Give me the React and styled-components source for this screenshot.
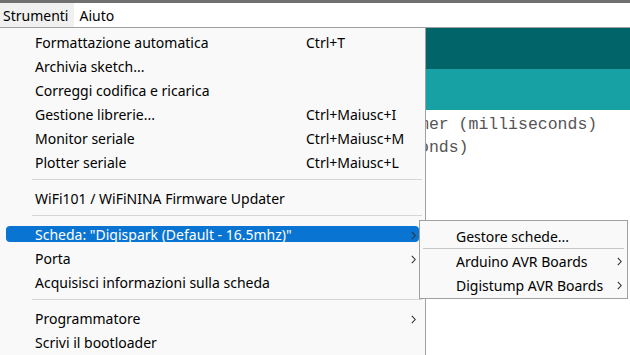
import React from "react";
import styled, { createGlobalStyle } from "styled-components";

const GlobalStyle = createGlobalStyle`
  html, body { margin: 0; padding: 0; background: #ffffff; overflow: hidden; }
  * { box-sizing: border-box; }
`;

const Screen = styled.div`
  position: relative;
  width: 630px;
  height: 355px;
  overflow: hidden;
  background: #ffffff;
  font-family: "Noto Sans", "Segoe UI", sans-serif;
  font-size: 14px;
  color: #000;
`;

const TitleStrip = styled.div`
  height: 3px;
  background: #707070;
`;

const MenuBar = styled.div`
  display: flex;
  height: 25px;
  border-bottom: 1px solid #a0a0a0;
  background: #ffffff;
`;

const MenuBarItem = styled.div`
  display: flex;
  align-items: center;
  height: 24px;
  padding: 0 ${(p) => (p.$active ? "6px 0 3px" : "5px 0 5px")};
  background: ${(p) => (p.$active ? "#f0f0f0" : "transparent")};
`;

const Editor = styled.div`
  display: flex;
  flex-direction: column;
`;

const Toolbar = styled.div`
  height: 41px;
  background: #006468;
`;

const TabBar = styled.div`
  height: 41px;
  background: #17a1a5;
`;

const CodeViewport = styled.div`
  margin-left: 426px;
  overflow: hidden;
`;

const Code = styled.pre`
  margin: 0 0 0 -7px;
  padding-top: 3px;
  font-family: "Liberation Mono", monospace;
  font-size: 16.5px;
  line-height: 23px;
  color: #555;
`;

const Dropdown = styled.div`
  position: absolute;
  top: 28px;
  left: 0;
  width: 426px;
  height: 340px;
  padding-top: 3px;
  background: #f9f9f9;
  border-right: 1px solid #a0a0a0;
`;

const Item = styled.div`
  position: relative;
  display: grid;
  grid-template-columns: 271px 1fr 6px;
  align-items: center;
  height: 24px;
  margin: 0 6px;
  padding-left: 29px;
  color: ${(p) => (p.$selected ? "#ffffff" : "#000000")};
  white-space: nowrap;
  &::before {
    content: "";
    display: ${(p) => (p.$selected ? "block" : "none")};
    position: absolute;
    left: 0;
    right: 0;
    top: 3px;
    bottom: 5px;
    border-radius: 4px;
    background: #0a74d3;
  }
  & > * { position: relative; }
`;

const Label = styled.span`
  transform: translateY(-1px);
`;

const Shortcut = styled.span`
  transform: translateY(-1px);
`;

const Separator = styled.div`
  height: 12px;
  padding-top: 4px;
  margin: 0 3px 0 32px;
  &::after {
    content: "";
    display: block;
    height: 1px;
    background: #d6d6d6;
  }
`;

const ArrowBox = styled.span`
  display: flex;
  align-items: center;
  justify-content: flex-start;
  margin-left: -2px;
`;

const SubMenu = styled.div`
  position: absolute;
  top: 220px;
  left: 419px;
  width: 209px;
  padding: 3px 0 1px;
  background: #f9f9f9;
  border: 1px solid #a0a0a0;
`;

const SubItem = styled.div`
  display: grid;
  grid-template-columns: 1fr 8px;
  align-items: center;
  height: 24px;
  padding: 0 2px 0 36px;
  white-space: nowrap;
`;

const SubSeparator = styled.div`
  height: 1px;
  margin: 0 3px;
  background: #c8c8c8;
`;

const Chevron = () => (
  <svg width="5" height="9" viewBox="0 0 5 9">
    <polyline points="0.8,0.8 4.2,4.5 0.8,8.2" fill="none" stroke="#333" strokeWidth="1.1" />
  </svg>
);

const mainItems = [
  { label: "Formattazione automatica", shortcut: "Ctrl+T" },
  { label: "Archivia sketch..." },
  { label: "Correggi codifica e ricarica" },
  { label: "Gestione librerie...", shortcut: "Ctrl+Maiusc+I" },
  { label: "Monitor seriale", shortcut: "Ctrl+Maiusc+M" },
  { label: "Plotter seriale", shortcut: "Ctrl+Maiusc+L" },
  { sep: true },
  { label: "WiFi101 / WiFiNINA Firmware Updater" },
  { sep: true },
  { label: 'Scheda: "Digispark (Default - 16.5mhz)"', arrow: true, selected: true },
  { label: "Porta", arrow: true },
  { label: "Acquisisci informazioni sulla scheda" },
  { sep: true },
  { label: "Programmatore", arrow: true },
  { label: "Scrivi il bootloader" },
];

export default function App() {
  return (
    <Screen>
      <GlobalStyle />
      <TitleStrip />
      <MenuBar>
        <MenuBarItem $active>Strumenti</MenuBarItem>
        <MenuBarItem>Aiuto</MenuBarItem>
      </MenuBar>
      <Editor>
        <Toolbar />
        <TabBar />
        <CodeViewport>
          <Code>{"mer (milliseconds)\nonds)"}</Code>
        </CodeViewport>
      </Editor>
      <Dropdown>
        {mainItems.map((it, i) =>
          it.sep ? (
            <Separator key={i} />
          ) : (
            <Item key={i} $selected={it.selected}>
              <Label>{it.label}</Label>
              <Shortcut>{it.shortcut || ""}</Shortcut>
              <ArrowBox>{it.arrow ? <Chevron /> : null}</ArrowBox>
            </Item>
          )
        )}
      </Dropdown>
      <SubMenu>
        <SubItem>
          <span>Gestore schede...</span>
          <span />
        </SubItem>
        <SubSeparator />
        <SubItem>
          <span>Arduino AVR Boards</span>
          <Chevron />
        </SubItem>
        <SubItem>
          <span>Digistump AVR Boards</span>
          <Chevron />
        </SubItem>
      </SubMenu>
    </Screen>
  );
}
